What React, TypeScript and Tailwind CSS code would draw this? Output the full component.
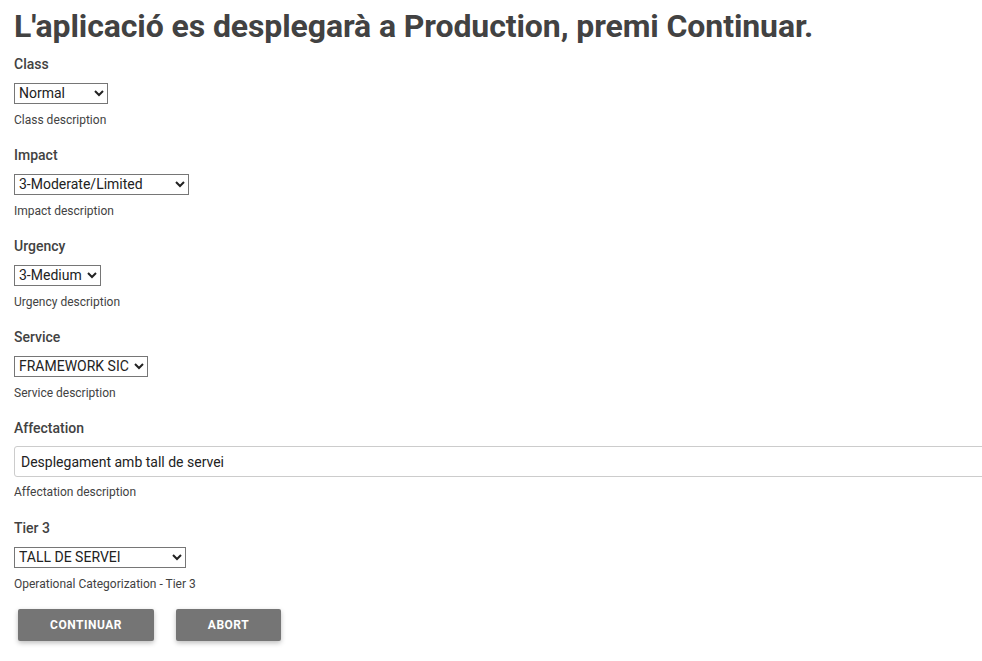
import React, { useState } from 'react';

type Field = {
  label: string;
  desc: string;
  value: string;
  options: string[];
  width: string;
};

const fields: Field[] = [
  { label: 'Class', desc: 'Class description', value: 'Normal', options: ['Normal', 'Urgent', 'Standard'], width: 'w-[94px]' },
  { label: 'Impact', desc: 'Impact description', value: '3-Moderate/Limited', options: ['1-Extensive/Widespread', '2-Significant/Large', '3-Moderate/Limited', '4-Minor/Localized'], width: 'w-[175px]' },
  { label: 'Urgency', desc: 'Urgency description', value: '3-Medium', options: ['1-Critical', '2-High', '3-Medium', '4-Low'], width: 'w-[87px]' },
  { label: 'Service', desc: 'Service description', value: 'FRAMEWORK SIC', options: ['FRAMEWORK SIC'], width: 'w-[134px]' },
];

const Select: React.FC<{ f: Field }> = ({ f }) => {
  const [val, setVal] = useState(f.value);
  return (
    <select
      value={val}
      onChange={(e) => setVal(e.target.value)}
      className={`${f.width} h-[21px] border border-[#767676] bg-white text-[14px] leading-[18px] text-[#222]`}
    >
      {f.options.map((o) => (
        <option key={o}>{o}</option>
      ))}
    </select>
  );
};

const App: React.FC = () => {
  const [affect, setAffect] = useState('Desplegament amb tall de servei');
  const [tier, setTier] = useState('TALL DE SERVEI');

  return (
    <div className="min-h-screen overflow-hidden bg-white px-[14px] font-['Roboto',sans-serif] text-[#424242]">
      <h1 className="pt-[7px] text-[32px] font-bold leading-[38px] tracking-[-0.1px]">
        L'aplicació es desplegarà a Production, premi Continuar.
      </h1>

      <div className="mt-[9px] flex flex-col">
        {fields.map((f) => (
          <div key={f.label} className="mb-[17px] flex flex-col items-start">
            <label className="text-[14px] font-medium leading-[20px]">{f.label}</label>
            <div className="mt-[7px]">
              <Select f={f} />
            </div>
            <p className="mt-[7px] text-[12px] leading-[16px]">{f.desc}</p>
          </div>
        ))}

        <div className="mb-[18px] flex flex-col items-start">
          <label className="text-[14px] font-medium leading-[20px]">Affectation</label>
          <input
            value={affect}
            onChange={(e) => setAffect(e.target.value)}
            className="mt-[8px] h-[31px] w-[calc(100%+40px)] rounded-[3px] border border-[#cccccc] px-[6px] text-[14px] text-[#222]"
          />
          <p className="mt-[7px] text-[12px] leading-[16px]">Affectation description</p>
        </div>

        <div className="flex flex-col items-start">
          <label className="text-[14px] font-medium leading-[20px]">Tier 3</label>
          <div className="mt-[7px]">
            <select
              value={tier}
              onChange={(e) => setTier(e.target.value)}
              className="h-[21px] w-[172px] border border-[#767676] bg-white text-[14px] leading-[18px] text-[#222]"
            >
              <option>TALL DE SERVEI</option>
              <option>SENSE TALL DE SERVEI</option>
            </select>
          </div>
          <p className="mt-[7px] text-[12px] leading-[16px]">Operational Categorization - Tier 3</p>
        </div>

        <div className="mt-[17px] flex gap-[22px] pl-[4px]">
          <button className="h-[32px] w-[136px] rounded-[2px] bg-[#757575] text-[12px] font-bold uppercase tracking-[0.5px] text-white shadow-[0_2px_5px_rgba(0,0,0,0.26)]">
            Continuar
          </button>
          <button className="h-[32px] w-[105px] rounded-[2px] bg-[#757575] text-[12px] font-bold uppercase tracking-[0.5px] text-white shadow-[0_2px_5px_rgba(0,0,0,0.26)]">
            Abort
          </button>
        </div>
      </div>
    </div>
  );
};

export default App;
